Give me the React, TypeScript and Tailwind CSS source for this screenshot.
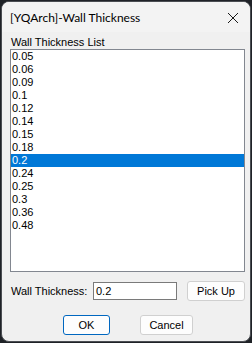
import React from "react";

const items = ["0.05","0.06","0.09","0.1","0.12","0.14","0.15","0.18","0.2","0.24","0.25","0.3","0.36","0.48"];

export default function App() {
  return (
    <div className="w-[252px] h-[343px] bg-[#1f2227] pt-[1px] pl-[1px]" style={{ fontFamily: '"Liberation Sans", Arial, sans-serif' }}>
      <div className="w-[250px] h-[341px] rounded-[8px] bg-[#f0f0f0] border border-[#4a4d52] overflow-hidden flex flex-col">
        <div className="h-[30px] bg-[#f3f3f3] flex items-center justify-between pl-[8px] pr-[8px] shrink-0">
          <span className="text-[12px] text-black pt-[2px]" style={{ fontFamily: 'Lato, "Noto Sans", sans-serif' }}>[YQArch]-Wall Thickness</span>
          <svg width="12" height="12" viewBox="0 0 12 12" className="mt-[2px] mr-[3px]">
            <path d="M1 1 L11 11 M11 1 L1 11" stroke="#1a1a1a" strokeWidth="1" fill="none" />
          </svg>
        </div>
        <div className="flex flex-col pl-[8px] pt-[4px] text-[11px] text-black">
          <div className="h-[13px] leading-[13px] pl-[1px]">Wall Thickness List</div>
          <div className="w-[235px] h-[223px] border border-[#828790] bg-white flex flex-col">
            {items.map((it) => (
              <div
                key={it}
                className={
                  it === "0.2"
                    ? "h-[13px] leading-[13px] pl-[1px] bg-[#0078d7] text-white"
                    : "h-[13px] leading-[13px] pl-[1px] text-black"
                }
              >
                {it}
              </div>
            ))}
          </div>
          <div className="flex items-center h-[20px] mt-[9px]">
            <span className="w-[83px] pl-[1px]">Wall Thickness:</span>
            <div className="w-[84px] h-[18px] border border-[#7a7a7a] bg-white flex items-center pl-[2px]">0.2</div>
            <button className="ml-[10px] w-[58px] h-[20px] rounded-[3px] border border-[#d0d0d0] bg-[#fdfdfd] flex items-center justify-center text-[11px]">Pick Up</button>
          </div>
          <div className="flex items-center h-[20px] mt-[14px] pl-[53px]">
            <button className="w-[47px] h-[20px] rounded-[3px] border border-[#0067c0] bg-[#fdfdfd] flex items-center justify-center text-[11px]">OK</button>
            <button className="ml-[30px] w-[53px] h-[20px] rounded-[3px] border border-[#d0d0d0] bg-[#fdfdfd] flex items-center justify-center text-[11px]">Cancel</button>
          </div>
        </div>
      </div>
    </div>
  );
}
